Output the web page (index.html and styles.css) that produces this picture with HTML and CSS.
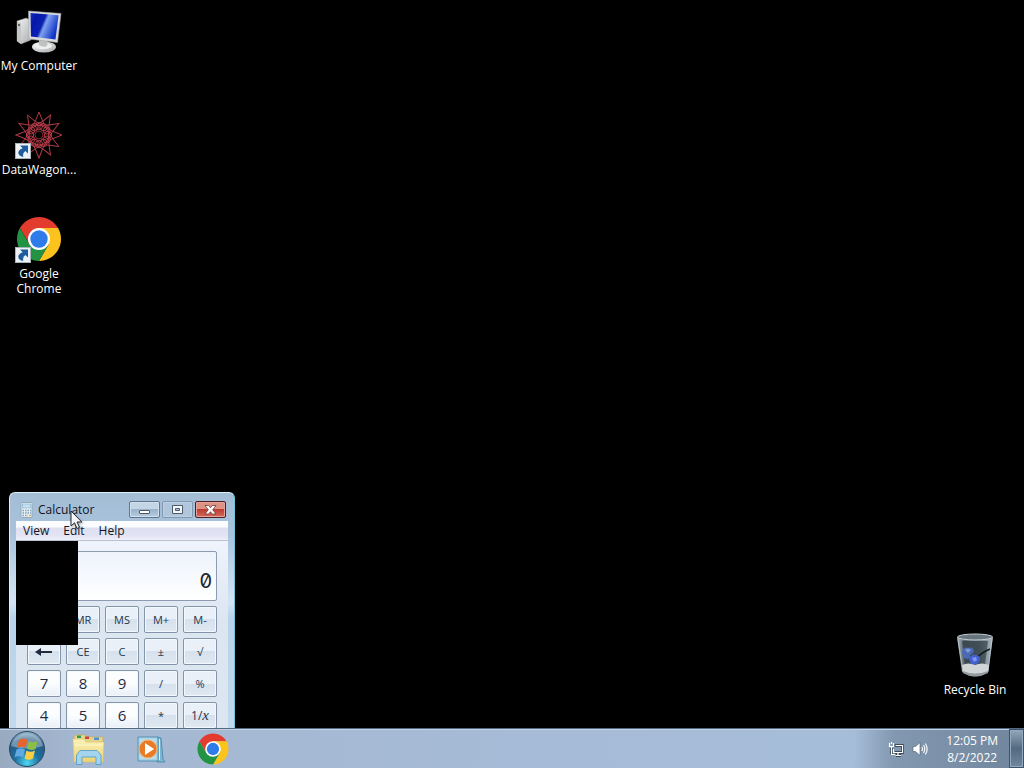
FILE: index.html
```
<!DOCTYPE html>
<html lang="en">
<head>
<meta charset="utf-8">
<title>Desktop</title>
<link rel="stylesheet" href="styles.css">
</head>
<body>
<svg class="defs" aria-hidden="true">
  <defs>
    <linearGradient id="screen" x1="0" y1="0" x2="1" y2=".4"><stop offset="0" stop-color="#1235c4"/><stop offset=".2" stop-color="#0718a8"/><stop offset=".5" stop-color="#0b20b4"/><stop offset=".6" stop-color="#7fa2ee"/><stop offset="1" stop-color="#1436c8"/></linearGradient>
    <linearGradient id="metal" x1="0" y1="0" x2="1" y2="1"><stop offset="0" stop-color="#f4f4f4"/><stop offset="1" stop-color="#a9adb0"/></linearGradient>
    <linearGradient id="glass" x1="0" y1="0" x2="1" y2="0"><stop offset="0" stop-color="#a9b6bc"/><stop offset=".2" stop-color="#5c6a72"/><stop offset=".6" stop-color="#6c7a82"/><stop offset="1" stop-color="#aab8c0"/></linearGradient>
    <radialGradient id="orb" cx=".5" cy=".9" r=".9"><stop offset="0" stop-color="#4fd8f0"/><stop offset=".4" stop-color="#1b6fa0"/><stop offset=".75" stop-color="#2b5a80"/><stop offset="1" stop-color="#9dbdd2"/></radialGradient>
    <linearGradient id="folder" x1="0" y1="0" x2="0" y2="1"><stop offset="0" stop-color="#fbf3b8"/><stop offset="1" stop-color="#ecd273"/></linearGradient>
    <symbol id="chrome" viewBox="0 0 48 48">
      <path fill="#e33b2e" d="M4.95 13A22 22 0 0 1 43.05 13H24L14.47 29.5Z"/>
      <path fill="#fcc31e" d="M43.05 13A22 22 0 0 1 24 46L33.53 29.5L24 13Z"/>
      <path fill="#229342" d="M4.95 13A22 22 0 0 0 24 46L33.53 29.5H14.47Z"/>
      <circle cx="24" cy="24" r="11" fill="#fff"/><circle cx="24" cy="24" r="8.7" fill="#2f7bea"/>
    </symbol>
    <symbol id="shortcut" viewBox="0 0 16 16">
      <rect x=".5" y=".5" width="15" height="15" fill="#edf2f6" stroke="#a9b3ba"/>
      <path fill="#1f5c9e" d="M5 2.5H13V10.5L10.4 8Q7.3 10 8.3 14Q3 13 3.3 9Q4 6.400 7.600 5.200Z"/>
    </symbol>
    <path id="point" d="M24 1Q31 21 43.900 35.500Q24 32 4.100 35.500Q17 21 24 1Z"/>
    <g id="ring"><circle cx="24" cy="15" r="3.500"/><circle cx="31.800" cy="19.500" r="3.500"/><circle cx="31.800" cy="28.500" r="3.500"/><circle cx="24" cy="33" r="3.500"/><circle cx="16.200" cy="28.500" r="3.500"/><circle cx="16.200" cy="19.500" r="3.500"/></g>
  </defs>
</svg>

<main class="desktop">
  <nav class="shortcuts" aria-label="Desktop shortcuts">
    <a class="shortcut" href="#">
      <svg class="shortcut-icon" viewBox="0 0 48 48" aria-hidden="true">
        <path fill="url(#metal)" stroke="#888" stroke-width=".5" d="M2 14L11 11L16 13V33L6 37L2 34Z"/>
        <path fill="#c4c6c6" d="M2 14L6 16V37L2 34Z"/><circle cx="4" cy="18" r="1" fill="#444"/>
        <ellipse cx="29" cy="40" rx="12" ry="5.500" fill="url(#metal)"/><ellipse cx="28" cy="39" rx="9" ry="3.200" fill="#eee"/>
        <path fill="#bfc1c2" d="M24 32L33 33L32 39Q28 41 24 38Z"/>
        <path fill="#d8dadb" stroke="#a2a4a5" stroke-width=".6" d="M13.500 4L46 6.500L42.500 35.500L14 32Z"/>
        <path fill="url(#screen)" d="M15.500 6L43.500 8.200L40.500 32.500L16 29.500Z"/>
      </svg>
      <span>My Computer</span>
    </a>
    <a class="shortcut" href="#">
      <svg class="shortcut-icon" viewBox="0 0 48 48" aria-hidden="true">
        <g fill="none" stroke="#b13a47">
          <use href="#point"/><use href="#point" transform="rotate(30 24 24)"/><use href="#point" transform="rotate(60 24 24)"/><use href="#point" transform="rotate(90 24 24)"/>
          <use href="#ring"/><use href="#ring" transform="rotate(30 24 24)"/>
        </g>
        <circle cx="24" cy="24" r="4" fill="#000" stroke="#7c2832"/>
        <use href="#shortcut" x="0" y="32" width="16" height="16"/>
      </svg>
      <span>DataWagon...</span>
    </a>
    <a class="shortcut" href="#">
      <svg class="shortcut-icon" viewBox="0 0 48 48" aria-hidden="true"><use href="#chrome" width="48" height="48"/><use href="#shortcut" x="0" y="32" width="16" height="16"/></svg>
      <span>Google Chrome</span>
    </a>
  </nav>

  <a class="shortcut recycle" href="#">
    <svg class="shortcut-icon" viewBox="0 0 48 48" aria-hidden="true">
      <path fill="url(#glass)" d="M6 6L11 41Q24 50 37 41L42 6Z"/>
      <path fill="#27323a" opacity=".6" d="M11 10H37L34 34L14 36Z"/>
      <path fill="none" stroke="#12191e" stroke-width="1.500" d="M39 18Q29 22 23 30"/>
      <path fill="#4a6ab4" d="M11 21Q12 15 17 17Q22 15 23 20Q22 23 19 24Q20 28 16 28Q12 27 12 25Z"/><path fill="#7e9bd8" d="M14 19Q17 16 20 19L17 22Z"/>
      <path fill="#4261d0" d="M18 28Q20 23 25 24Q31 25 28 31Q25 35 20 33Z"/><path fill="#8295ed" d="M21 27L25 26L26 29L23 31Z"/>
      <path fill="#d2d5d5" d="M11 34Q17 31 24 34Q31 31 38 34L37 41Q24 49 12 41Z"/>
      <path fill="#929a9e" d="M12 40Q24 45 37 40L37 42Q24 49 12 42Z"/>
      <path fill="none" stroke="#c1cdd3" opacity=".7" d="M7 8L12 41M41 8L37 41"/>
      <ellipse cx="24" cy="6" rx="17.500" ry="3" fill="#67757d" stroke="#c3ced3"/>
    </svg>
    <span>Recycle Bin</span>
  </a>

  <section class="window" aria-label="Calculator">
    <header class="titlebar">
      <svg class="app-icon" viewBox="0 0 16 16" aria-hidden="true"><rect x="2" y=".5" width="11" height="15" rx="1" fill="#e9f2f6" stroke="#91aabd"/><rect x="3.500" y="2" width="8" height="4" fill="#c3e0ef" stroke="#82aac5" stroke-width=".6"/><path stroke="#7d9db5" stroke-width="1.300" stroke-dasharray="1.500 1" d="M3.500 8.500H12M3.500 11H12M3.500 13.500H9"/><path stroke="#d3b35b" stroke-width="1.300" d="M10 13.500H12"/></svg>
      <h1 class="title">Calculator</h1>
      <div class="controls">
        <button class="control" aria-label="Minimize"><svg viewBox="0 0 16 12"><rect x="2.500" y="6.500" width="10" height="3" rx=".5" fill="#fff" stroke="#4c5967"/></svg></button>
        <button class="control control-off" aria-label="Maximize"><svg viewBox="0 0 16 12"><path fill="#f3f7fb" fill-rule="evenodd" stroke="#4c5967" d="M2.500 1.500H12.500V9.500H2.500ZM5.500 4.500V6.500H9.500V4.500Z"/></svg></button>
        <button class="control control-close" aria-label="Close"><svg viewBox="0 0 16 12"><path fill="#fff" stroke="#663b40" stroke-width=".8" d="M2 1.500H5.800L7.500 3.800L9.200 1.500H13L9.700 5.750L13 10H9.200L7.500 7.700L5.800 10H2L5.300 5.750Z"/></svg></button>
      </div>
    </header>
    <div class="client">
      <div class="menubar"><button>View</button><button>Edit</button><button>Help</button></div>
      <div class="calculator">
        <output class="display">0</output>
        <div class="keys">
          <button class="key" aria-label="Memory clear"></button><button class="key">MR</button><button class="key">MS</button><button class="key">M+</button><button class="key">M-</button>
          <button class="key" aria-label="Backspace"><svg class="back" viewBox="0 0 18 10"><path fill="none" stroke="#222b3c" stroke-width="2" d="M2 5H17"/><path fill="#222b3c" d="M0 5L6 1V9Z"/></svg></button><button class="key">CE</button><button class="key">C</button><button class="key">±</button><button class="key">√</button>
          <button class="key digit">7</button><button class="key digit">8</button><button class="key digit">9</button><button class="key">/</button><button class="key">%</button>
          <button class="key digit">4</button><button class="key digit">5</button><button class="key digit">6</button><button class="key">*</button><button class="key reciprocal">1/<i>x</i></button>
        </div>
      </div>
    </div>
  </section>
  <div class="blackout"></div>
  <svg class="pointer" viewBox="0 0 13 20" aria-hidden="true"><path fill="#f5f7fb" stroke="#25282f" d="M1 1V16L4.500 12.800L7 18.500L9.500 17.300L7 12H11.800Z"/></svg>
</main>

<footer class="taskbar">
  <button class="start" aria-label="Start">
    <svg viewBox="0 0 38 38" aria-hidden="true">
      <circle cx="19" cy="19" r="17.500" fill="url(#orb)" stroke="#244963"/>
      <path fill="#dbeaf2" opacity=".4" d="M3 16A16.500 16.500 0 0 1 35 16Q19 21 3 16Z"/>
      <path fill="#e8642c" d="M11 10Q15 7 19.500 10L17.500 18Q13.500 15.500 9 18Z"/>
      <path fill="#8ebf45" d="M21 11Q25 13.500 29.500 11L27.500 19Q23 21 19 18.500Z"/>
      <path fill="#61a9e3" d="M8.500 19.500Q13 17 17 19.500L15 27.500Q11 25 6.500 27.500Z"/>
      <path fill="#f9ce45" d="M18.500 20.500Q22.500 23 27 20.500L25 28.500Q21 31 16.500 28.500Z"/>
    </svg>
  </button>
  <nav class="pinned" aria-label="Pinned programs">
    <button aria-label="File Explorer"><svg viewBox="0 0 34 34" aria-hidden="true">
      <path fill="#e7d58e" stroke="#c5ac58" stroke-width=".7" d="M2 5L4 3H13L15 5H31V28H2Z"/>
      <path fill="#2c9c4d" d="M5 3.500H9V6H5Z"/><path fill="#cf4534" d="M13 4.500H17V7H13Z"/><path fill="#4b91d0" d="M22 5.500H27V8H22Z"/>
      <path fill="url(#folder)" stroke="#d9c16a" stroke-width=".6" d="M1 7H12L14 10H32L31 30H2Z"/><path stroke="#fff8cd" d="M3 13H30"/>
      <path fill="#a5d4ee" stroke="#4e99c7" stroke-width=".8" d="M4.500 32.500V23L8 18.500H25L29 23V32.500H24V25H10V32.500Z"/>
    </svg></button>
    <button aria-label="Media Player"><svg viewBox="0 0 34 34" aria-hidden="true">
      <path fill="#7fb5d3" stroke="#3f85ad" stroke-width=".8" d="M23 5L27 6L29 27L31 30H23Z"/><path fill="#a8cfe2" stroke="#3f85ad" stroke-width=".8" d="M4 5H24V29H4Z"/><path stroke="#d9eef8" d="M25.500 7V28"/>
      <path fill="#b9dcec" d="M5.500 6.500H22V27H5.500Z"/><circle cx="14" cy="17" r="9" fill="#e87b27" stroke="#f5b36e"/><path fill="#fff" d="M11 11L20 17L11 23Z"/>
    </svg></button>
    <button aria-label="Google Chrome"><svg viewBox="0 0 48 48" aria-hidden="true"><use href="#chrome" width="48" height="48"/></svg></button>
  </nav>
  <div class="tray">
    <svg class="tray-icon" viewBox="0 0 16 16" aria-hidden="true"><g fill="none" stroke="#27333d" stroke-width="2.500"><path d="M6.500 4.500H14.500V11.500H6.500M3.500 7V13.500M8 14.500H13"/></g><g fill="none" stroke="#fff" stroke-width="1.200"><path d="M7.500 4.500H14.500V11.500H5.500V8M3.500 6V13.500H7M7.500 14.500H13M1.500 2V5.500H5.500V2M3.500 1V3M10 12V14"/></g></svg>
    <svg class="tray-icon" viewBox="0 0 16 16" aria-hidden="true"><path fill="#fff" stroke="#4d5c6a" stroke-width=".6" d="M1 5.500H3.500L8 1.500V14.500L3.500 10.500H1Z"/><path fill="none" stroke="#f5f9fc" stroke-width="1.200" d="M9.800 6Q11.200 8 9.800 10M11.500 4Q14 8 11.500 12M13.300 2.500Q17 8 13.300 13.500"/></svg>
    <div class="clock"><time>12:05 PM</time><time>8/2/2022</time></div>
  </div>
  <button class="show-desktop" aria-label="Show desktop"></button>
</footer>
</body>
</html>
```

FILE: styles.css
```
* { box-sizing: border-box; }
body {
  margin: 0;
  height: 100vh;
  display: flex;
  flex-direction: column;
  overflow: hidden;
  background: #000;
  color: #10151f;
  font: 12px/15px "Open Sans", "Noto Sans", sans-serif;
}
button { margin: 0; padding: 0; border: 0; background: none; color: inherit; font: inherit; }
svg { display: block; }
.defs { position: absolute; width: 0; height: 0; }

.desktop { position: relative; flex: 1; min-height: 0; overflow: hidden; }
.shortcuts { display: flex; flex-direction: column; width: 78px; padding-top: 7px; }
.shortcut {
  display: flex;
  flex-direction: column;
  align-items: center;
  gap: 3px;
  min-height: 104px;
  color: #fff;
  text-align: center;
  text-decoration: none;
}
.shortcut-icon { width: 48px; height: 48px; }
.recycle { position: absolute; right: 10px; bottom: -7px; width: 78px; }

.window {
  position: absolute;
  left: 9px;
  top: 492px;
  width: 226px;
  padding: 0 6px 7px;
  border: 1px solid #d8f0fb;
  border-right-color: #6fc4dc;
  border-radius: 6px 6px 0 0;
  background: linear-gradient(#a3bdd5, #a9c3dc 40px, #d4e5f4 110px, #b8d3ea 125px, #c4d9ec);
}
.titlebar { display: flex; align-items: center; height: 28px; padding: 5px 2px 0 3px; }
.app-icon { width: 16px; height: 16px; }
.title { flex: 1; margin: 0 0 0 3px; font-size: 12px; font-weight: 400; line-height: 16px; }
.controls { display: flex; gap: 2px; }
.control {
  display: flex;
  align-items: center;
  justify-content: center;
  width: 31px;
  height: 17px;
  border: 1px solid #61768d;
  border-radius: 2px;
  box-shadow: inset 0 0 0 1px #d1e0ee;
  background: linear-gradient(#c4d5e6 50%, #9bb3cb 50%, #b5cce0);
}
.control svg { width: 16px; height: 12px; }
.control-off { border-color: #8499b1; box-shadow: inset 0 0 0 1px #bdd0e3; background: #b0c6dc; }
.control-close { border-color: #4d2029; box-shadow: inset 0 0 0 1px #e5a39a; background: linear-gradient(#dc9384 50%, #bd3c32 50%, #d5695a); }
.client { background: #e2e9f4; }
.menubar {
  display: flex;
  gap: 14px;
  height: 20px;
  padding: 0 7px;
  border-bottom: 1px solid #b9c2d5;
  background: linear-gradient(#fbfcff 6px, #dedff0 7px, #e2e4f3 15px, #eef1fa);
}
.calculator { padding: 10px 11px; background: linear-gradient(#eff3fc, #dce6f1 80px); }
.display {
  display: flex;
  align-items: flex-end;
  justify-content: flex-end;
  height: 50px;
  margin-bottom: 5px;
  padding: 0 4px 7px;
  border: 1px solid #8c9bb0;
  border-radius: 2px;
  background: linear-gradient(#edf3fc, #fff);
  color: #20242c;
  font: 400 20px/24px Inter, sans-serif;
  font-feature-settings: "zero";
}
.keys { display: grid; grid-template-columns: repeat(5, 1fr); grid-auto-rows: 27px; gap: 5px; }
.key {
  display: flex;
  align-items: center;
  justify-content: center;
  border: 1px solid #8494a9;
  border-radius: 2px;
  box-shadow: inset 0 0 0 1px #f3f8fd;
  background: linear-gradient(#e9f0f8 50%, #d6e1ed 50%, #dfe9f3);
  color: #25354b;
  font-size: 11px;
}
.digit { background: linear-gradient(#fbfdff 50%, #e8eff7); color: #1f2b3e; font-size: 15px; }
.back { width: 18px; height: 10px; }
.reciprocal { font-size: 12px; }
.reciprocal i { font-family: "Liberation Serif", serif; font-size: 15px; }
.blackout { position: absolute; left: 16px; top: 541px; width: 62px; height: 104px; background: #000; }
.pointer { position: absolute; left: 70px; top: 510px; width: 13px; height: 20px; filter: drop-shadow(1px 1px 1px #6668); }

.taskbar {
  position: relative;
  display: flex;
  align-items: center;
  height: 40px;
  border-top: 1px solid #526a83;
  box-shadow: inset 0 1px #c3d3e3;
  background: linear-gradient(90deg, #98aac0, #a5b8d2 80px, #a6bdd9 calc(100% - 170px), #8298b0 calc(100% - 130px), #71869d);
}
.start { width: 38px; height: 38px; margin-left: 8px; }
.pinned { display: flex; flex: 1; gap: 28px; margin-left: 26px; }
.pinned button { width: 34px; height: 34px; }
.tray { display: flex; align-items: center; gap: 8px; color: #fff; }
.tray-icon { width: 16px; height: 16px; }
.clock { display: flex; flex-direction: column; align-items: center; margin-left: 10px; line-height: 17px; }
.show-desktop {
  align-self: stretch;
  width: 15px;
  margin-left: 11px;
  border: 1px solid #3f5266;
  box-shadow: inset 0 0 0 1px #92a8bd;
  background: linear-gradient(#95a7b9, #536a80 50%, #6f879e);
}
```
